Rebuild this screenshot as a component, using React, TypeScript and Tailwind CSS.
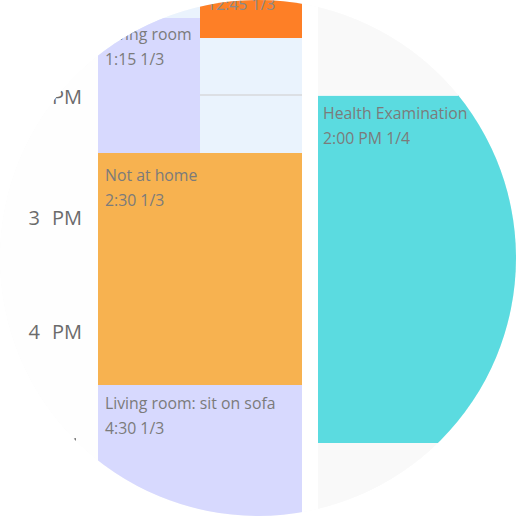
export default function App() {
  const font = { fontFamily: '"Open Sans", "Noto Sans", sans-serif' };

  return (
    <div className="w-[516px] h-[516px] bg-white" style={font}>
      <div className="w-[516px] h-[516px] rounded-full overflow-hidden bg-[#fbfbfb] flex">
        {/* hour labels */}
        <div className="w-[98px] h-full flex flex-col items-end pr-[16px] text-[20px] text-[#6b6b6b] bg-[#fefefe]">
          <div className="h-[79px]" />
          <div className="h-[121px] flex items-start leading-[36px] pl-2">
            <span className="inline-block w-[5px] overflow-hidden text-right">2</span>
            <span className="ml-[4px]">PM</span>
          </div>
          <div className="h-[114px] flex items-start leading-[36px] pl-[28px]">
            <span>3</span>
            <span className="ml-[12px]">PM</span>
          </div>
          <div className="h-[124px] flex items-start leading-[36px] pl-[28px]">
            <span>4</span>
            <span className="ml-[12px]">PM</span>
          </div>
          <div className="h-[20px] w-[6px] flex items-start mr-[3px]">
            <span className="block w-[3px] h-[6px] bg-[#7a7a7a] rounded-tl-sm" />
          </div>
        </div>

        {/* first day column */}
        <div className="w-[204px] h-full flex flex-col text-[15.8px] leading-[25px] text-[#7b7b7b]">
          <div className="h-[153px] flex">
            <div className="w-[102px] flex flex-col bg-[#eaf3fd]">
              <div className="h-[18px]" />
              <div className="flex-1 bg-[#d7d9fe] px-[7px] pt-[4px]">
                <div className="whitespace-nowrap">Living room</div>
                <div>1:15 1/3</div>
              </div>
            </div>
            <div className="w-[102px] flex flex-col bg-[#eaf3fd]">
              <div className="h-[38px] bg-[#fe7f26] px-[7px] text-[#8a8a8a] overflow-hidden">
                <div className="-mt-[8px] whitespace-nowrap">12:45 1/3</div>
              </div>
              <div className="h-[56px]" />
              <div className="h-[2px] bg-[#dcdfe4]" />
              <div className="flex-1" />
            </div>
          </div>
          <div className="h-[232px] bg-[#f7b250] px-[7px] pt-[10px]">
            <div>Not at home</div>
            <div>2:30 1/3</div>
          </div>
          <div className="flex-1 bg-[#d7d9fe] px-[7px] pt-[6px]">
            <div className="whitespace-nowrap">Living room: sit on sofa</div>
            <div>4:30 1/3</div>
          </div>
        </div>

        {/* gap */}
        <div className="w-[16px] h-full bg-white" />

        {/* second day column */}
        <div className="flex-1 h-full flex flex-col bg-[#f9f9f9] text-[15.8px] leading-[25px] text-[#7b7b7b]">
          <div className="h-[95px]" />
          <div className="h-[348px] bg-[#5bdbe0] border-t border-[#e6f7f8] px-[5px] pt-[5px]">
            <div className="whitespace-nowrap">Health Examination</div>
            <div>2:00 PM 1/4</div>
          </div>
          <div className="flex-1" />
        </div>
      </div>
    </div>
  );
}
